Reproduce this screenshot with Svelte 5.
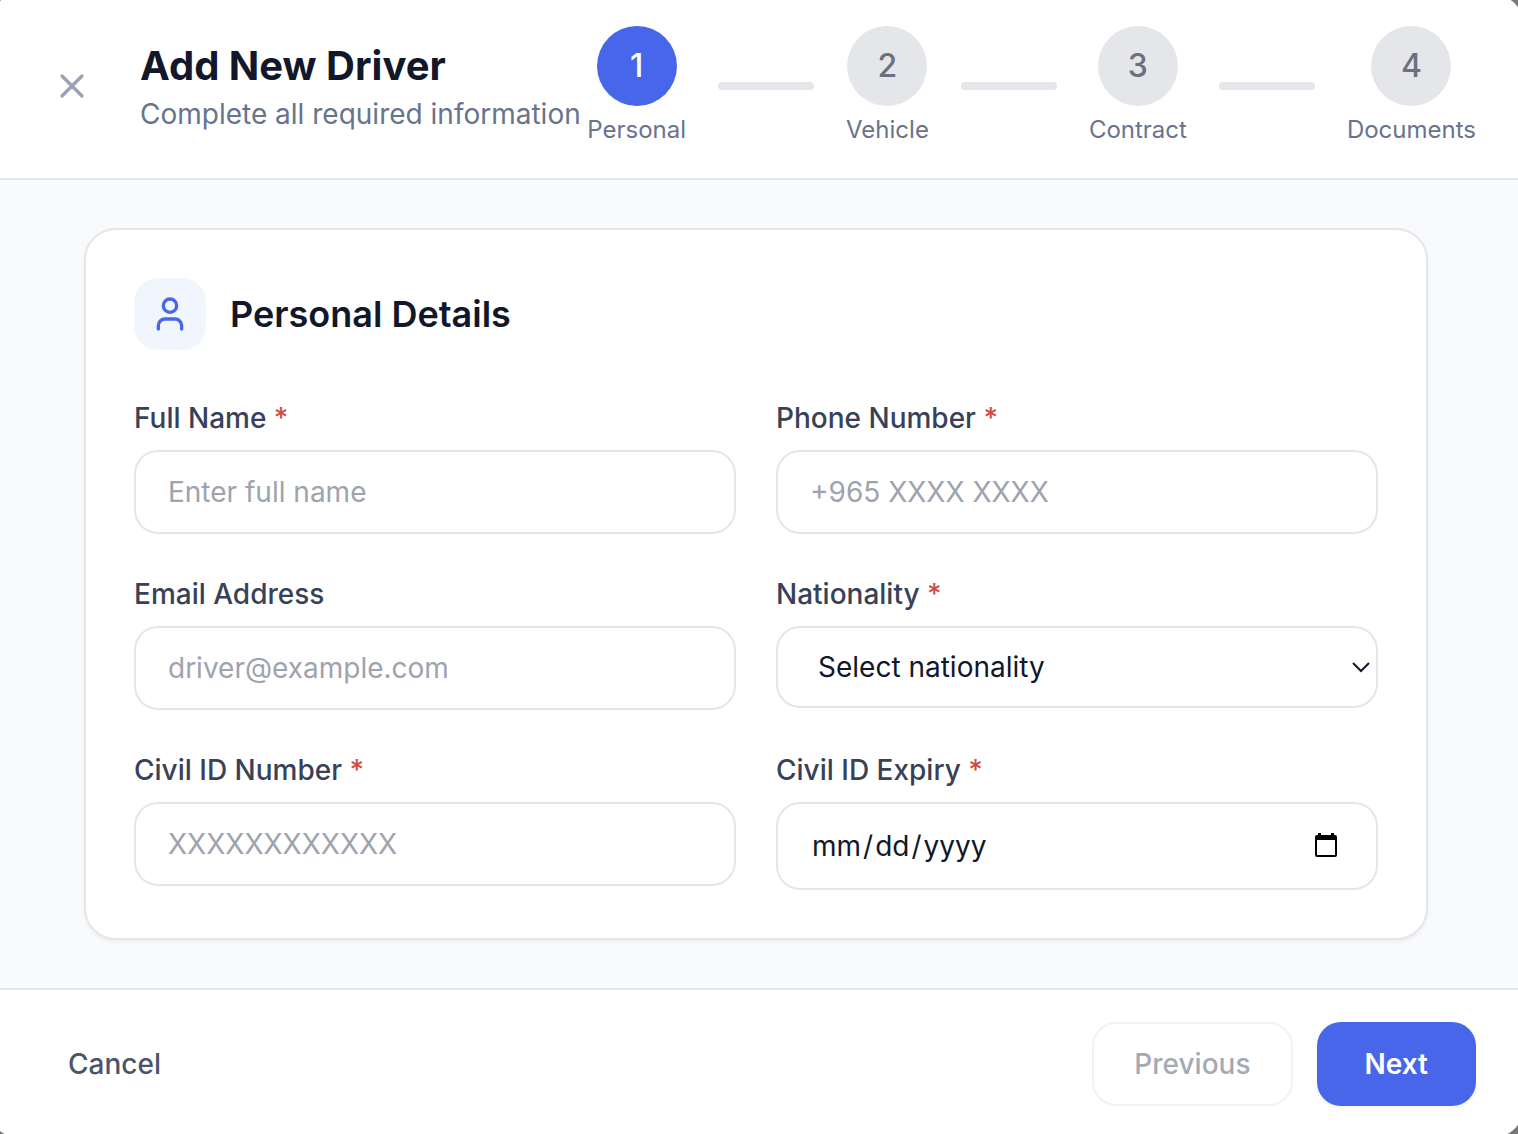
<script>
  const steps = ['Personal', 'Vehicle', 'Contract', 'Documents'];
  const nationalities = ['Kuwaiti', 'Indian', 'Egyptian', 'Pakistani', 'Filipino'];

  let current = 0;
  let driver = {
    name: '',
    phone: '',
    email: '',
    nationality: '',
    civilId: '',
    civilIdExpiry: ''
  };

  const goBack = () => (current -= 1);
  const goForward = () => (current = Math.min(current + 1, steps.length - 1));
</script>

<div class="backdrop">
  <form class="modal" on:submit|preventDefault={goForward}>
    <header>
      <button type="button" class="close" aria-label="Close">
        <svg viewBox="0 0 24 24"><path d="M18 6 6 18M6 6l12 12" /></svg>
      </button>
      <div class="heading">
        <h1>Add New Driver</h1>
        <p>Complete all required information</p>
      </div>
      <ol>
        {#each steps as step, i}
          {#if i > 0}
            <li class="line" class:done={i <= current} aria-hidden="true"></li>
          {/if}
          <li class="step" class:active={i <= current}>
            <span class="number">{i + 1}</span>
            <span class="name">{step}</span>
          </li>
        {/each}
      </ol>
    </header>

    <main>
      <section>
        <div class="title">
          <span class="icon">
            <svg viewBox="0 0 24 24">
              <circle cx="12" cy="7" r="4" />
              <path d="M19 21v-2a4 4 0 0 0-4-4H9a4 4 0 0 0-4 4v2" />
            </svg>
          </span>
          <h2>Personal Details</h2>
        </div>

        <div class="fields">
          <div class="field">
            <label for="name">Full Name <em>*</em></label>
            <input id="name" type="text" placeholder="Enter full name" bind:value={driver.name} />
          </div>
          <div class="field">
            <label for="phone">Phone Number <em>*</em></label>
            <input id="phone" type="tel" placeholder="+965 XXXX XXXX" bind:value={driver.phone} />
          </div>
          <div class="field">
            <label for="email">Email Address</label>
            <input id="email" type="email" placeholder="driver@example.com" bind:value={driver.email} />
          </div>
          <div class="field">
            <label for="nationality">Nationality <em>*</em></label>
            <div class="control">
              <select id="nationality" bind:value={driver.nationality}>
                <option value="">Select nationality</option>
                {#each nationalities as nationality}
                  <option value={nationality}>{nationality}</option>
                {/each}
              </select>
              <svg class="chevron" viewBox="0 0 18 12"><path d="M1 2l8 8 8-8" /></svg>
            </div>
          </div>
          <div class="field">
            <label for="civil-id">Civil ID Number <em>*</em></label>
            <input id="civil-id" type="text" placeholder="XXXXXXXXXXXX" bind:value={driver.civilId} />
          </div>
          <div class="field">
            <label for="expiry">Civil ID Expiry <em>*</em></label>
            <div class="control">
              <input id="expiry" type="date" bind:value={driver.civilIdExpiry} />
              <svg class="calendar" viewBox="0 0 22 26">
                <path
                  fill-rule="evenodd"
                  d="M3 0h3v2h10V0h3v2h1a2 2 0 0 1 2 2v18a2 2 0 0 1-2 2H2a2 2 0 0 1-2-2V4a2 2 0 0 1 2-2h1zM2 7v15h18V7z" />
              </svg>
            </div>
          </div>
        </div>
      </section>
    </main>

    <footer>
      <button type="button" class="cancel">Cancel</button>
      <button type="button" class="previous" disabled={current === 0} on:click={goBack}>Previous</button>
      <button type="submit" class="next">Next</button>
    </footer>
  </form>
</div>

<style>
  :global(body) {
    background: #777;
  }
  * {
    box-sizing: border-box;
  }
  .backdrop {
    min-height: 100vh;
    overflow: hidden;
    font-family: Inter, "Liberation Sans", sans-serif;
    font-size: 28px;
    line-height: 40px;
    color: #12172a;
  }
  /* the dialog runs slightly past the window on every side */
  .modal {
    margin: -6px -6px -4px -12px;
    border-radius: 32px;
    overflow: hidden;
    background: white;
  }
  header {
    display: flex;
    align-items: center;
    padding: 32px 48px;
    border-bottom: 2px solid #e5e7eb;
  }
  h1,
  h2,
  p,
  ol {
    margin: 0;
    padding: 0;
  }
  h1 {
    font-size: 40px;
    line-height: 56px;
    font-weight: 700;
  }
  p {
    color: #68738c;
    white-space: nowrap;
  }
  button,
  input,
  select {
    font: inherit;
    color: inherit;
    background: white;
  }
  button {
    border: none;
    border-radius: 24px;
    font-weight: 500;
    cursor: pointer;
  }
  svg {
    display: block;
    fill: none;
    stroke: currentColor;
    stroke-width: 2;
    stroke-linecap: round;
    stroke-linejoin: round;
  }
  .close {
    padding: 16px;
    margin-right: 32px;
    color: #97a3b7;
  }
  .close svg {
    width: 40px;
    height: 40px;
  }
  ol {
    display: flex;
    align-items: center;
    gap: 32px;
    margin-left: auto;
    list-style: none;
  }
  .step {
    display: flex;
    flex-direction: column;
    align-items: center;
    gap: 8px;
  }
  .number {
    display: flex;
    align-items: center;
    justify-content: center;
    width: 80px;
    height: 80px;
    border-radius: 50%;
    font-size: 32px;
    font-weight: 500;
    color: #6d717f;
    background: #e5e6ea;
  }
  .active .number {
    color: white;
    background: #4866e9;
  }
  .name {
    font-size: 24px;
    line-height: 32px;
    color: #68738c;
  }
  .line {
    width: 96px;
    height: 8px;
    border-radius: 4px;
    background: #e5e6ea;
  }
  .line.done {
    background: #4866e9;
  }
  main {
    padding: 48px;
    background: #f8fafc;
  }
  section {
    max-width: 1344px;
    margin: 0 auto;
    padding: 48px;
    border: 2px solid #e5e6ea;
    border-radius: 32px;
    background: white;
    box-shadow: 0 2px 4px rgba(0, 0, 0, 0.05);
  }
  .title {
    display: flex;
    align-items: center;
    gap: 24px;
    margin-bottom: 48px;
  }
  .icon {
    padding: 16px;
    border-radius: 24px;
    color: #4866e9;
    background: #f1f6fe;
  }
  .icon svg {
    width: 40px;
    height: 40px;
  }
  h2 {
    font-size: 36px;
    line-height: 56px;
    font-weight: 600;
  }
  .fields {
    display: grid;
    grid-template-columns: 1fr 1fr;
    gap: 40px;
    align-items: start;
  }
  label {
    display: block;
    margin-bottom: 12px;
    font-weight: 500;
    color: #384257;
  }
  em {
    font-style: normal;
    color: #d04b43;
  }
  input,
  select {
    display: block;
    width: 100%;
    height: 84px;
    padding: 0 32px;
    border: 2px solid #e5e6ea;
    border-radius: 24px;
  }
  input::placeholder {
    color: #9ea3ae;
    opacity: 1;
  }
  .control {
    position: relative;
  }
  select {
    height: 82px;
    padding: 0 40px;
    appearance: none;
  }
  input[type="date"] {
    height: 88px;
  }
  input::-webkit-datetime-edit-month-field,
  input::-webkit-datetime-edit-day-field,
  input::-webkit-datetime-edit-year-field {
    padding: 0 2px;
  }
  input[type="date"]::-webkit-calendar-picker-indicator {
    opacity: 0;
  }
  .chevron,
  .calendar {
    position: absolute;
    top: 0;
    bottom: 0;
    margin: auto 0;
    pointer-events: none;
  }
  .chevron {
    right: 8px;
    width: 18px;
    height: 12px;
    stroke-linecap: butt;
    stroke-linejoin: miter;
  }
  .calendar {
    right: 41px;
    width: 22px;
    height: 26px;
    fill: black;
    stroke: none;
  }
  footer {
    display: flex;
    align-items: center;
    gap: 24px;
    padding: 32px 48px;
    border-top: 2px solid #e5e7eb;
  }
  footer button {
    height: 84px;
  }
  .cancel {
    margin-right: auto;
    padding: 0 32px;
    color: #4b556a;
  }
  .previous {
    padding: 0 40px;
    border: 2px solid #e5e6ea;
    color: #4b556a;
  }
  .previous:disabled {
    opacity: 0.5;
    cursor: default;
  }
  .next {
    padding: 0 48px;
    font-weight: 600;
    color: white;
    background: #4866e9;
    box-shadow: 0 2px 4px rgba(0, 0, 0, 0.05);
  }
</style>
